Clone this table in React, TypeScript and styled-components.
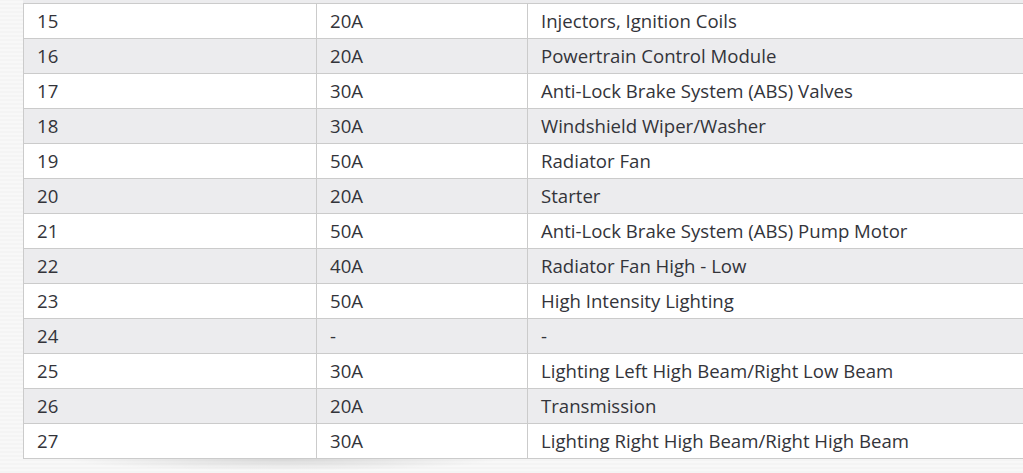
import { createGlobalStyle } from 'styled-components';
import styled from 'styled-components';

const GlobalStyle = createGlobalStyle`
  html, body {
    margin: 0;
    padding: 0;
    background: #f6f6f6;
    overflow: hidden;
  }
`;

const fuses: [string, string, string][] = [
  ['15', '20A', 'Injectors, Ignition Coils'],
  ['16', '20A', 'Powertrain Control Module'],
  ['17', '30A', 'Anti-Lock Brake System (ABS) Valves'],
  ['18', '30A', 'Windshield Wiper/Washer'],
  ['19', '50A', 'Radiator Fan'],
  ['20', '20A', 'Starter'],
  ['21', '50A', 'Anti-Lock Brake System (ABS) Pump Motor'],
  ['22', '40A', 'Radiator Fan High - Low'],
  ['23', '50A', 'High Intensity Lighting'],
  ['24', '-', '-'],
  ['25', '30A', 'Lighting Left High Beam/Right Low Beam'],
  ['26', '20A', 'Transmission'],
  ['27', '30A', 'Lighting Right High Beam/Right High Beam'],
];

export default function App() {
  return (
    <>
      <GlobalStyle />
      <Page>
        <TableWrap>
          <FuseTable>
            <colgroup>
              <col style={{ width: 293 }} />
              <col style={{ width: 211 }} />
              <col />
            </colgroup>
            <tbody>
              {fuses.map(([num, amp, desc], i) => (
                <Row key={num} $striped={i % 2 === 1}>
                  <Cell>{num}</Cell>
                  <Cell>{amp}</Cell>
                  <Cell>{desc}</Cell>
                </Row>
              ))}
            </tbody>
          </FuseTable>
        </TableWrap>
        <Shadow />
      </Page>
    </>
  );
}

const Page = styled.div`
  width: 1023px;
  height: 473px;
  overflow: hidden;
  padding-left: 23px;
  box-sizing: border-box;
  background: repeating-linear-gradient(
    0deg,
    #f4f4f4 0px,
    #f4f4f4 2px,
    #f8f8f8 2px,
    #f8f8f8 4px
  );
`;

/* the gray strip on top is the bottom of the previous (scrolled away) row */
const TableWrap = styled.div`
  width: 1040px;
  padding-top: 3px;
  background: #ececee;
`;

const FuseTable = styled.table`
  width: 100%;
  border-collapse: collapse;
  table-layout: fixed;
  font-family: 'Open Sans', 'Liberation Sans', sans-serif;
  font-size: 18.6px;
  color: #33343a;
`;

interface StripeProps {
  $striped: boolean;
}

const Row = styled.tr<StripeProps>`
  height: 35px;
  background: ${(p) => (p.$striped ? '#ececee' : '#ffffff')};
`;

const Cell = styled.td`
  border: 1px solid #cbcbcb;
  padding: 0 13px;
  vertical-align: middle;
  white-space: nowrap;
  line-height: 1;
`;

const Shadow = styled.div`
  width: 440px;
  height: 12px;
  margin-left: 40px;
  background: radial-gradient(ellipse at top, rgba(0, 0, 0, 0.12), rgba(0, 0, 0, 0) 70%);
`;
